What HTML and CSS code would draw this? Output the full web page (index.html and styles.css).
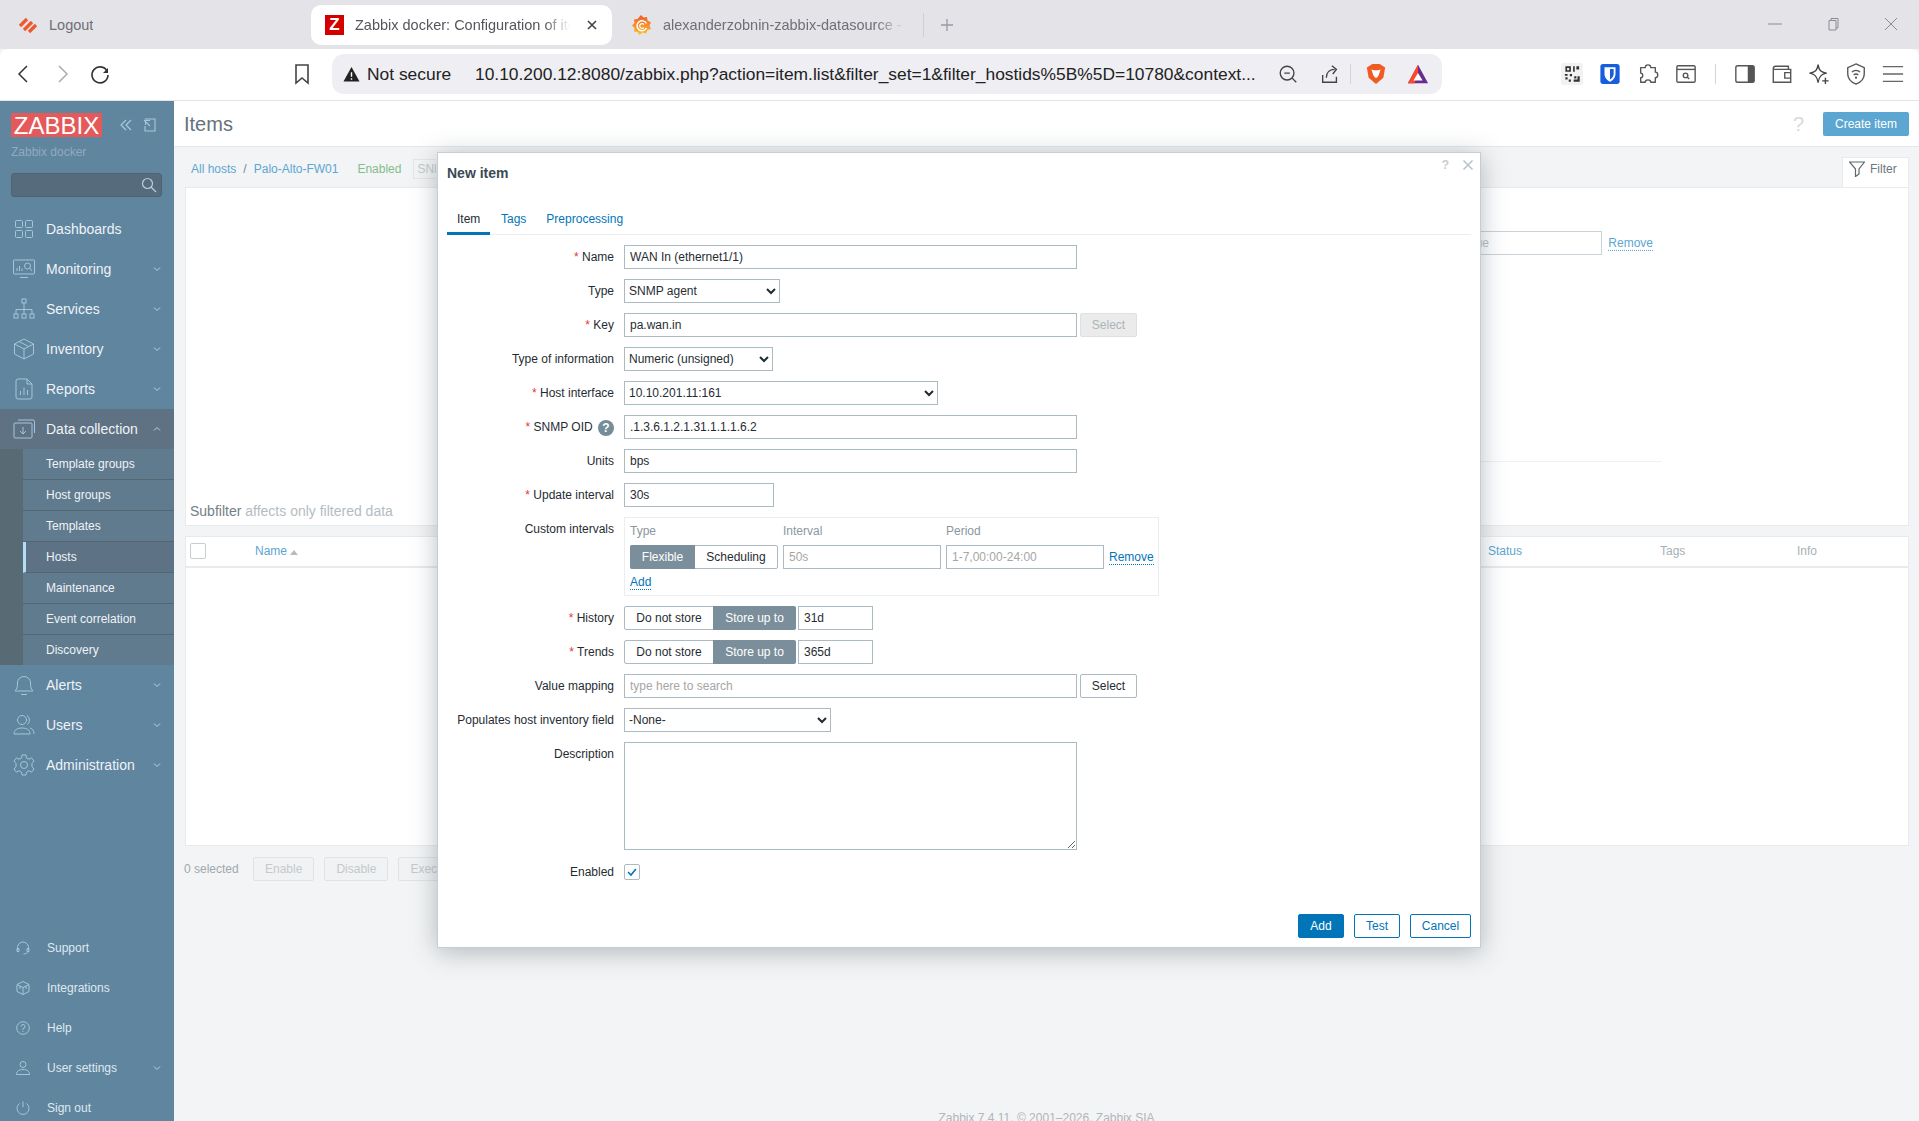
FILE: index.html
```html
<!doctype html>
<html>
<head>
<meta charset="utf-8">
<title>Zabbix docker: Configuration of items</title>
<link rel="stylesheet" href="styles.css">
</head>
<body>

<!-- browser chrome -->
<div class="tabstrip">
	<div class="tab tab-logout">
		<svg class="fav" viewBox="0 0 20 20"><g fill="none" stroke="#f0582b" stroke-width="3.2"><path d="M2 11 9 4"/><path d="M6 15 14 7"/><path d="M11 17 18 10"/></g></svg>
		<span class="tab-title">Logout</span>
	</div>
	<div class="tab tab-active">
		<span class="fav-z">Z</span>
		<span class="tab-title tab-fade">Zabbix docker: Configuration of items</span>
		<svg class="tab-x" viewBox="0 0 12 12"><path d="M2 2 10 10M10 2 2 10" stroke="#444" stroke-width="1.6"/></svg>
	</div>
	<div class="tab tab-grafana">
		<svg class="fav" viewBox="0 0 20 20">
			<defs><linearGradient id="graf" x1="0" y1="1" x2="0" y2="0"><stop offset="0" stop-color="#fcc12e"/><stop offset="1" stop-color="#f05a28"/></linearGradient></defs>
			<path d="M9 0 11.500 2.500 15 2 15.500 5.500 19 7.500 17.500 10.500 19 14 15.500 15 14 18.500 10.500 17.500 7.500 20 5.500 17 2 16.500 2.500 13 0 10.500 2.500 8 2 4.500 5.500 4Z" fill="url(#graf)"/>
			<path d="M14.500 8.500A5 5 0 1 0 14.500 13" fill="none" stroke="#fff" stroke-width="1.500"/>
			<path d="M12 9.500A2.400 2.400 0 1 0 12 12.500" fill="none" stroke="#fff" stroke-width="1.200"/>
		</svg>
		<span class="tab-title tab-fade">alexanderzobnin-zabbix-datasource - Grafana</span>
	</div>
	<span class="tab-sep"></span>
	<svg class="tab-plus" viewBox="0 0 14 14"><path d="M7 1V13M1 7H13" stroke="#9a9aa2" stroke-width="1.3"/></svg>
	<div class="winctl">
		<svg viewBox="0 0 14 14"><path d="M0 7H14" stroke="#8b8b92" stroke-width="1"/></svg>
		<svg viewBox="0 0 14 14"><path d="M3 3.5H10V13H3ZM5 3.5V1.5H12V11H10" fill="none" stroke="#8b8b92"/></svg>
		<svg viewBox="0 0 14 14"><path d="M1 1 13 13M13 1 1 13" stroke="#8b8b92"/></svg>
	</div>
</div>

<div class="toolbar">
	<div class="nav-btns">
		<svg viewBox="0 0 24 24"><path d="M15 4 7 12 15 20" fill="none" stroke="#333" stroke-width="1.5"/></svg>
		<svg viewBox="0 0 24 24"><path d="M9 4 17 12 9 20" fill="none" stroke="#aaa" stroke-width="1.5"/></svg>
		<svg viewBox="0 0 24 24"><path d="M19 9A8 8 0 1 0 20 13" fill="none" stroke="#333" stroke-width="1.6"/><path d="M20 6V11H15Z" fill="#333"/></svg>
	</div>
	<svg class="bookmark" viewBox="0 0 24 24"><path d="M6 3H18V21L12 16 6 21Z" fill="none" stroke="#444" stroke-width="1.6"/></svg>
	<div class="addr">
		<svg class="warn" viewBox="0 0 18 18"><path d="M9 1 17.500 16.500H.5Z" fill="#222"/><path d="M9 6.500V11.500M9 13V14.500" stroke="#fff" stroke-width="1.500"/></svg>
		<span class="not-secure">Not secure</span>
		<span class="url">10.10.200.12:8080/zabbix.php?action=item.list&amp;filter_set=1&amp;filter_hostids%5B%5D=10780&amp;context...</span>
		<svg class="addr-ico a-zoom" viewBox="0 0 24 24"><circle cx="11" cy="11" r="7.500" fill="none" stroke="#444" stroke-width="1.500"/><path d="M8 11H14M16.500 16.500 21 21" stroke="#444" stroke-width="1.500"/></svg>
		<svg class="addr-ico a-share" viewBox="0 0 24 24"><path d="M4 13V21H19V15M8 16C8 10 12 7 17 7M14 3 19 7 15 12" fill="none" stroke="#444" stroke-width="1.500"/></svg>
		<span class="addr-sep"></span>
		<svg class="addr-ico a-brave" viewBox="0 0 24 24"><path d="M5 3 8 1H16L19 3 22 5 20 16 12 23 4 16 2 5Z" fill="#f15a22"/><path d="M7 7 10 8H14L17 7 15 13 13 16H11L9 13Z" fill="#fff"/></svg>
		<svg class="addr-ico a-bat" viewBox="0 0 24 24"><path d="M12 2 23 22H1Z" fill="#662d91"/><path d="M12 2 1 22H8L12 13Z" fill="#ff4724"/><path d="M12 11 17 19H7Z" fill="#fff"/></svg>
	</div>
	<div class="ext">
		<span class="ext-qr"><svg viewBox="0 0 20 20"><path d="M4 3H9V8H4ZM5.500 4.500V6.500H7.500V4.500ZM11 3H12.500V8H11ZM14 3H16.500V6H14ZM3.500 10H6V11.500H3.500ZM8 10H10V12H8ZM4 13H6V15H4ZM7 15H9V17H7ZM12 12H14V14H12ZM15 12H17V17H11.500V15H15Z" fill="#333" fill-rule="evenodd"/></svg></span>
		<svg viewBox="0 0 24 24"><rect x="1.500" y="1" width="21" height="22" rx="3" fill="#175ddc"/><path d="M6 4.500H18V12C18 16 15 19 12 20.500 9 19 6 16 6 12Z" fill="#fff"/><path d="M12 6.500H16V12C16 14.500 14 16.800 12 18Z" fill="#175ddc"/></svg>
		<svg viewBox="0 0 24 24"><path d="M9 5C9 1 15 1 15 5H20V10C23.500 10 23.500 16 20 16V21H15C15 17.500 9 17.500 9 21H4V16C7 16 7 11 4 11V5Z" fill="none" stroke="#555" stroke-width="1.500" stroke-linejoin="round"/></svg>
		<svg viewBox="0 0 24 24"><rect x="2" y="3" width="20" height="18" rx="1.500" fill="none" stroke="#555" stroke-width="1.500"/><path d="M2 7H22" stroke="#555" stroke-width="1.500"/><circle cx="11.500" cy="13.500" r="2.500" fill="none" stroke="#555" stroke-width="1.500"/><path d="M13.500 15.500 15.500 17.500" stroke="#555" stroke-width="1.500"/></svg>
		<span class="ext-sep"></span>
		<svg viewBox="0 0 24 24"><rect x="2" y="3" width="20" height="18" rx="2" fill="none" stroke="#555" stroke-width="1.500"/><rect x="15" y="3" width="7" height="18" rx="1" fill="#555"/></svg>
		<svg viewBox="0 0 24 24"><path d="M19 7V3.500H5A2.500 2.500 0 0 0 2.500 6V21H21.500V7H3" fill="none" stroke="#555" stroke-width="1.500"/><path d="M21.500 10.500H15V16.500H21.500" fill="none" stroke="#555" stroke-width="1.500"/></svg>
		<svg viewBox="0 0 24 24"><path d="M11 2C12 8 14 10 20 11 14 12 12 15 11 21 10 15 8 12 2 11 8 10 10 8 11 2Z" fill="none" stroke="#444" stroke-width="1.500" stroke-linejoin="round"/><path d="M19 16V23M15.500 19.500H22.500" stroke="#444" stroke-width="1.500"/></svg>
		<svg viewBox="0 0 24 24"><path d="M12 1 21 5V12C21 17 17 21 12 23 7 21 3 17 3 12V5Z" fill="none" stroke="#555" stroke-width="1.500"/><path d="M7.500 10C10 7.500 14 7.500 16.500 10M9.500 13C11 11.800 13 11.800 14.500 13" fill="none" stroke="#555" stroke-width="1.400"/><circle cx="12" cy="16" r="1.200" fill="#555"/></svg>
		<svg viewBox="0 0 24 24"><path d="M1 4H23M1 12H23M1 20H23" stroke="#666" stroke-width="1.500"/></svg>
	</div>
</div>

<div class="app">

	<aside class="sidebar">
		<div class="brand">
			<span class="logo">ZABBIX</span>
			<svg class="brand-ico" viewBox="0 0 14 14"><path d="M7 2 2 7 7 12M12 2 7 7 12 12" fill="none" stroke="#a9c8dc" stroke-width="1.200"/></svg>
			<svg class="brand-ico" viewBox="0 0 14 14"><path d="M3 1H13V13H3V8M2 2 8 8M3.500 7V2.500H8" fill="none" stroke="#a9c8dc" stroke-width="1.100"/></svg>
		</div>
		<div class="server">Zabbix docker</div>
		<div class="search">
			<svg viewBox="0 0 16 16"><circle cx="6.500" cy="6.500" r="5" fill="none" stroke="#b8cfdd" stroke-width="1.200"/><path d="M10 10 15 15" stroke="#b8cfdd" stroke-width="1.200"/></svg>
		</div>

		<nav class="menu">
			<div class="mi">
				<svg viewBox="0 0 22 22"><g fill="none" stroke="#a3c6dc"><rect x="2.500" y="2.500" width="7" height="7" rx="1"/><rect x="12.500" y="2.500" width="7" height="7" rx="1"/><rect x="2.500" y="12.500" width="7" height="7" rx="1"/><rect x="12.500" y="12.500" width="7" height="7" rx="1"/></g></svg>
				<span>Dashboards</span>
			</div>
			<div class="mi has-sub">
				<svg viewBox="0 0 22 22"><g fill="none" stroke="#a3c6dc"><path d="M13 2H2A1 1 0 0 0 .5 3V15A1 1 0 0 0 2 16H20A1.500 1.500 0 0 0 21.500 15V3A1 1 0 0 0 20 2Z"/><path d="M7 19.500H15M4 13V10M6.500 13V8M9 13V10.500"/><circle cx="14.500" cy="8" r="3"/><path d="M16.700 10 19 13"/></g></svg>
				<span>Monitoring</span>
				<svg class="chev" viewBox="0 0 8 6"><path d="M1 1.500 4 4.500 7 1.500" fill="none" stroke="#b9d2e2"/></svg>
			</div>
			<div class="mi has-sub">
				<svg viewBox="0 0 22 22"><g fill="none" stroke="#a3c6dc"><rect x="9" y="1" width="4" height="4"/><rect x="1" y="16" width="4" height="4"/><rect x="9" y="16" width="4" height="4"/><rect x="17" y="16" width="4" height="4"/><path d="M11 5V16M3 16V11.500H19V16"/></g></svg>
				<span>Services</span>
				<svg class="chev" viewBox="0 0 8 6"><path d="M1 1.500 4 4.500 7 1.500" fill="none" stroke="#b9d2e2"/></svg>
			</div>
			<div class="mi has-sub">
				<svg viewBox="0 0 22 22"><path d="M11 1 20.500 6V16L11 21 1.500 16V6ZM1.500 6 11 11 20.500 6M11 11V21M6 3.500 15.500 8.500" fill="none" stroke="#a3c6dc"/></svg>
				<span>Inventory</span>
				<svg class="chev" viewBox="0 0 8 6"><path d="M1 1.500 4 4.500 7 1.500" fill="none" stroke="#b9d2e2"/></svg>
			</div>
			<div class="mi has-sub">
				<svg viewBox="0 0 22 22"><path d="M5 1H14L19 6V19A2 2 0 0 1 17 21H5A2 2 0 0 1 3 19V3A2 2 0 0 1 5 1ZM14 1V6H19M7.500 17V13M11 17V9.500M14.500 17V12" fill="none" stroke="#a3c6dc"/></svg>
				<span>Reports</span>
				<svg class="chev" viewBox="0 0 8 6"><path d="M1 1.500 4 4.500 7 1.500" fill="none" stroke="#b9d2e2"/></svg>
			</div>
			<div class="mi has-sub mi-open">
				<svg viewBox="0 0 22 22"><path d="M2 5H18A1 1 0 0 1 19 6V19A1 1 0 0 1 18 20H2A1 1 0 0 1 1 19V6A1 1 0 0 1 2 5ZM5 2H20A1.500 1.500 0 0 1 21.500 3.500V15M10 9V16M7 13 10 16 13 13" fill="none" stroke="#a3c6dc"/></svg>
				<span>Data collection</span>
				<svg class="chev" viewBox="0 0 8 6"><path d="M1 4.500 4 1.500 7 4.500" fill="none" stroke="#b9d2e2"/></svg>
			</div>
			<div class="submenu">
				<div class="si">Template groups</div>
				<div class="si">Host groups</div>
				<div class="si">Templates</div>
				<div class="si si-selected">Hosts</div>
				<div class="si">Maintenance</div>
				<div class="si">Event correlation</div>
				<div class="si">Discovery</div>
			</div>
			<div class="mi has-sub">
				<svg viewBox="0 0 22 22"><path d="M2 17C4 15 4.500 13 4.500 9A6.500 6.500 0 0 1 17.500 9C17.500 13 18 15 20 17ZM8 20.500H14" fill="none" stroke="#a3c6dc"/></svg>
				<span>Alerts</span>
				<svg class="chev" viewBox="0 0 8 6"><path d="M1 1.500 4 4.500 7 1.500" fill="none" stroke="#b9d2e2"/></svg>
			</div>
			<div class="mi has-sub">
				<svg viewBox="0 0 22 22"><g fill="none" stroke="#a3c6dc"><circle cx="9" cy="6" r="4.500"/><path d="M1 20C1 16 4 14 9 14S17 16 17 20ZM14 1.500C17 3 17 9 14.500 10.500M17 14C20 15 21 17 21 20"/></g></svg>
				<span>Users</span>
				<svg class="chev" viewBox="0 0 8 6"><path d="M1 1.500 4 4.500 7 1.500" fill="none" stroke="#b9d2e2"/></svg>
			</div>
			<div class="mi has-sub">
				<svg viewBox="0 0 22 22"><g fill="none" stroke="#a3c6dc"><circle cx="11" cy="11" r="3.500"/><path d="M9 1H13L13.500 4 16 5.300 18.500 3.800 21 7 19 9.300V12.700L21 15 18.500 18.200 16 16.700 13.500 18 13 21H9L8.500 18 6 16.700 3.500 18.200 1 15 3 12.700V9.300L1 7 3.500 3.800 6 5.300 8.500 4Z"/></g></svg>
				<span>Administration</span>
				<svg class="chev" viewBox="0 0 8 6"><path d="M1 1.500 4 4.500 7 1.500" fill="none" stroke="#b9d2e2"/></svg>
			</div>
		</nav>

		<nav class="usermenu">
			<div class="ui">
				<svg viewBox="0 0 14 14"><path d="M1.500 9V6.500A5.500 5.500 0 0 1 12.500 6.500V9M1 7.500H3V10.500H1ZM11 7.500H13V10.500H11ZM12 10.500C12 12 10 13 7.500 13" fill="none" stroke="#a3c6dc"/></svg>
				<span>Support</span>
			</div>
			<div class="ui">
				<svg viewBox="0 0 14 14"><path d="M7 .5 13 3.500V10.500L7 13.500 1 10.500V3.500ZM1 3.500 7 6.500 13 3.500M7 6.500V13.500M4 5V8M10 5V8" fill="none" stroke="#a3c6dc"/></svg>
				<span>Integrations</span>
			</div>
			<div class="ui">
				<svg viewBox="0 0 14 14"><circle cx="7" cy="7" r="6.300" fill="none" stroke="#a3c6dc"/><path d="M5 5.500A2 2 0 1 1 7 7.500V9M7 10V11" fill="none" stroke="#a3c6dc"/></svg>
				<span>Help</span>
			</div>
			<div class="ui">
				<svg viewBox="0 0 14 14"><circle cx="7" cy="3.500" r="3" fill="none" stroke="#a3c6dc"/><path d="M.5 13.500C.5 10 3 8.500 7 8.500S13.500 10 13.500 13.500Z" fill="none" stroke="#a3c6dc"/></svg>
				<span>User settings</span>
				<svg class="chev" viewBox="0 0 8 6"><path d="M1 1.500 4 4.500 7 1.500" fill="none" stroke="#b9d2e2"/></svg>
			</div>
			<div class="ui">
				<svg viewBox="0 0 14 14"><path d="M3.500 2.500A6 6 0 1 0 10.500 2.500M7 .5V6" fill="none" stroke="#a3c6dc"/></svg>
				<span>Sign out</span>
			</div>
		</nav>
	</aside>

	<main class="main">
		<header class="page-head">
			<h1>Items</h1>
			<span class="head-help">?</span>
			<button class="btn-create">Create item</button>
		</header>

		<div class="crumbs-row">
			<div class="crumbs">
				<a>All hosts</a><span class="slash">/</span><a>Palo-Alto-FW01</a>
				<span class="status-on">Enabled</span>
				<span class="tag-snmp">SNMP</span>
			</div>
			<div class="filter-tab">
				<svg viewBox="0 0 16 16"><path d="M.5 1H15.500L10 8V13L6.500 15.500V8Z" fill="none" stroke="#5c666d" stroke-width="1.200"/></svg>
				<span>Filter</span>
			</div>
		</div>

		<section class="filter-panel">
			<div class="filter-row">
				<input class="flt-value" type="text" placeholder="value">
				<a class="dotted flt-remove">Remove</a>
			</div>
			<div class="filter-line"></div>
			<div class="subfilter"><b>Subfilter</b> affects only filtered data</div>
		</section>

		<section class="list">
			<div class="list-head">
				<span class="list-check"></span>
				<a class="col-name">Name <i class="sort-up"></i></a>
				<a class="col-status">Status</a>
				<span class="col-tags">Tags</span>
				<span class="col-info">Info</span>
			</div>
		</section>

		<div class="actions">
			<span class="sel-count">0 selected</span>
			<button class="btn-off">Enable</button>
			<button class="btn-off">Disable</button>
			<button class="btn-off">Execute now</button>
		</div>

		<footer class="foot">Zabbix 7.4.11. © 2001–2026, Zabbix SIA</footer>
	</main>
</div>

<!-- popup over the page -->
<div class="modal">
	<div class="modal-head">
		<h4>New item</h4>
		<span class="modal-help">?</span>
		<svg class="modal-x" viewBox="0 0 12 12"><path d="M1.500 1.500 10.500 10.500M10.500 1.500 1.500 10.500" stroke="#b9c3c9" stroke-width="1.500"/></svg>
	</div>

	<div class="tabs">
		<a class="t-active">Item</a>
		<a>Tags</a>
		<a>Preprocessing</a>
	</div>

	<form class="form">
		<label><em>*</em> Name</label>
		<div><input class="w-full" type="text" value="WAN In (ethernet1/1)"></div>

		<label>Type</label>
		<div><select class="w-type"><option>SNMP agent</option></select></div>

		<label><em>*</em> Key</label>
		<div class="field-line"><input class="w-full" type="text" value="pa.wan.in"><button type="button" class="btn-select is-off">Select</button></div>

		<label>Type of information</label>
		<div><select class="w-info"><option>Numeric (unsigned)</option></select></div>

		<label><em>*</em> Host interface</label>
		<div><select class="w-iface"><option>10.10.201.11:161</option></select></div>

		<label><em>*</em> SNMP OID <i class="hint">?</i></label>
		<div><input class="w-full" type="text" value=".1.3.6.1.2.1.31.1.1.1.6.2"></div>

		<label>Units</label>
		<div><input class="w-full" type="text" value="bps"></div>

		<label><em>*</em> Update interval</label>
		<div><input class="w-upd" type="text" value="30s"></div>

		<label>Custom intervals</label>
		<div class="intervals">
			<div class="int-grid">
				<span class="int-h">Type</span>
				<span class="int-h">Interval</span>
				<span class="int-h">Period</span>
				<span></span>
				<div class="seg"><span class="seg-on">Flexible</span><span>Scheduling</span></div>
				<input type="text" placeholder="50s">
				<input type="text" placeholder="1-7,00:00-24:00">
				<a class="dotted link">Remove</a>
			</div>
			<a class="dotted link int-add">Add</a>
		</div>

		<label><em>*</em> History</label>
		<div class="field-line"><div class="seg seg-store"><span>Do not store</span><span class="seg-on">Store up to</span></div><input class="w-keep" type="text" value="31d"></div>

		<label><em>*</em> Trends</label>
		<div class="field-line"><div class="seg seg-store"><span>Do not store</span><span class="seg-on">Store up to</span></div><input class="w-keep" type="text" value="365d"></div>

		<label>Value mapping</label>
		<div class="field-line"><input class="w-full" type="text" placeholder="type here to search"><button type="button" class="btn-select">Select</button></div>

		<label>Populates host inventory field</label>
		<div><select class="w-inv"><option>-None-</option></select></div>

		<label>Description</label>
		<div><textarea class="w-full"></textarea></div>

		<label>Enabled</label>
		<div class="check-line"><span class="check"><svg viewBox="0 0 16 16"><path d="M3.500 8 6.800 11.500 12.500 4.500" fill="none" stroke="#0275b8" stroke-width="1.800"/></svg></span></div>
	</form>

	<div class="modal-foot">
		<button class="btn-add">Add</button>
		<button class="btn-line">Test</button>
		<button class="btn-line btn-cancel">Cancel</button>
	</div>
</div>

</body>
</html>
```

FILE: styles.css
```css
*{
	box-sizing:border-box;
}
html,body{
	margin:0px;
	padding:0px;
	height:100%;
}
body{
	position:relative;
	overflow:hidden;
	display:flex;
	flex-direction:column;
	background:#f3f4f5;
	font-family:"Liberation Sans",Arial,sans-serif;
	font-size:12px;
	color:#1f2c33;
}

/* browser chrome */
.tabstrip{
	display:flex;
	align-items:flex-end;
	flex:none;
	height:49px;
	background:#e3e3e8;
}
.tab{
	display:flex;
	align-items:center;
	height:40px;
	margin-bottom:4px;
	font-size:14.500px;
	color:#6f6f76;
	white-space:nowrap;
}
.tab-logout{
	width:311px;
	padding-left:18px;
}
.tab-active{
	width:301px;
	padding:0 14px;
	background:#fff;
	border-radius:10px;
	color:#55555c;
}
.tab-grafana{
	width:311px;
	padding:0 18px 0 20px;
}
.fav{
	flex:none;
	width:20px;
	height:20px;
	margin-right:11px;
}
.fav-z{
	flex:none;
	width:19px;
	height:20px;
	margin-right:11px;
	background:#d40000;
	color:#fff;
	font-weight:bold;
	font-size:17px;
	line-height:20px;
	text-align:center;
}
.tab-title{
	overflow:hidden;
}
.tab-fade{
	flex:1;
	-webkit-mask-image:linear-gradient(to right,#000 88%,transparent 100%);
	mask-image:linear-gradient(to right,#000 88%,transparent 100%);
}
.tab-x{
	flex:none;
	width:12px;
	height:12px;
	margin-left:16px;
}
.tab-sep{
	width:1px;
	height:24px;
	margin-bottom:12px;
	background:#cfcfd5;
}
.tab-plus{
	width:14px;
	height:14px;
	margin:0 0 17px 16px;
}
.winctl{
	display:flex;
	gap:44px;
	margin-left:auto;
	margin-right:21px;
	margin-bottom:18px;
}
.winctl svg{
	width:14px;
	height:14px;
}
.toolbar{
	display:flex;
	align-items:center;
	flex:none;
	height:52px;
	padding-bottom:1px;
	background:#fff;
	border-bottom:1px solid #e3e3e8;
	border-radius:8px 8px 0 0;
}
.nav-btns{
	display:flex;
	gap:14px;
	margin-left:12px;
}
.nav-btns svg{
	width:24px;
	height:24px;
}
.bookmark{
	width:24px;
	height:24px;
	margin-left:178px;
}
.addr{
	display:flex;
	align-items:center;
	width:1110px;
	height:40px;
	margin-left:18px;
	padding-left:11px;
	background:#eeeef3;
	border-radius:12px;
	font-size:17.400px;
	color:#222;
	white-space:nowrap;
}
.warn{
	width:17px;
	height:17px;
	margin-right:7px;
}
.not-secure{
	width:108px;
}
.url{
	width:802px;
}
.addr-ico{
	width:22px;
	height:22px;
}
.a-share{
	margin-left:20px;
}
.addr-sep{
	width:1px;
	height:20px;
	margin:0 14px 0 9px;
	background:#d4d4da;
}
.a-bat{
	margin-left:20px;
}
.ext{
	display:flex;
	align-items:center;
	margin-left:119px;
	gap:16px;
}
.ext svg{
	width:22px;
	height:22px;
	display:block;
}
.ext-qr{
	width:22px;
	height:22px;
	background:#f2f2f2;
	border-radius:2px;
}
.ext-sep{
	width:1px;
	height:20px;
	margin:0 2px;
	background:#d4d4da;
}
.ext-sep ~ svg + svg{
	margin-left:-1px;
}

/* app */
.app{
	display:flex;
	flex:1;
	min-height:0;
}
.sidebar{
	display:flex;
	flex-direction:column;
	flex:none;
	width:174px;
	overflow:hidden;
	background:#60859f;
	color:#eef3f7;
}
.brand{
	display:flex;
	align-items:center;
	flex:none;
	margin:12px 0 0 11px;
}
.logo{
	width:91px;
	height:24px;
	background:#e45959;
	color:#fff;
	font-size:24px;
	line-height:25px;
	text-align:center;
}
.brand-ico{
	width:14px;
	height:14px;
	margin-left:17px;
}
.brand-ico + .brand-ico{
	margin-left:9px;
}
.server{
	flex:none;
	margin:7px 0 0 11px;
	line-height:16px;
	color:#8fabbf;
}
.search{
	display:flex;
	align-items:center;
	justify-content:flex-end;
	flex:none;
	height:24px;
	margin:13px 12px 0 11px;
	padding-right:4px;
	background:#566c7d;
	border:1px solid #4e6272;
	border-radius:3px;
}
.search svg{
	width:16px;
	height:16px;
}
.menu{
	flex:none;
	margin-top:12px;
}
.mi{
	display:flex;
	align-items:center;
	height:40px;
	padding-left:13px;
	font-size:14px;
}
.mi > svg:first-child{
	flex:none;
	width:22px;
	height:22px;
	margin-right:11px;
}
.chev{
	width:8px;
	height:6px;
	margin-left:auto;
	margin-right:13px;
}
.mi-open{
	background:#5e7283;
}
.submenu{
	padding-left:23px;
	background:#586a74;
}
.si{
	height:31px;
	padding-left:23px;
	line-height:30px;
	background:#607a8e;
	border-bottom:1px solid #546672;
	color:#eef3f7;
}
.si:last-child{
	height:30px;
	border-bottom:0;
}
.si-selected{
	padding-left:20px;
	background:#5d7385;
	border-left:3px solid #b5dcf5;
}
.usermenu{
	flex:none;
	margin-top:auto;
	margin-bottom:-7px;
}
.ui{
	display:flex;
	align-items:center;
	height:40px;
	padding-left:16px;
	color:#dfe9f0;
}
.ui > svg:first-child{
	flex:none;
	width:14px;
	height:14px;
	margin-right:17px;
}

.main{
	flex:1;
	min-width:0;
	display:flex;
	flex-direction:column;
	overflow:hidden;
}
.page-head{
	display:flex;
	align-items:center;
	flex:none;
	height:46px;
	padding:0 9px 0 10px;
	background:#fff;
	border-bottom:1px solid #e5e8ea;
}
.page-head h1{
	margin:0;
	padding-top:1px;
	font-size:20px;
	font-weight:normal;
	color:#66727a;
}
.head-help{
	margin-left:auto;
	padding-top:1px;
	font-size:20px;
	color:#d5dade;
}
.btn-create{
	width:86px;
	height:24px;
	margin-left:19px;
	margin-right:1px;
	padding:0;
	background:#5ca6d2;
	border:0;
	border-radius:2px;
	color:#fff;
	font:12px "Liberation Sans",Arial,sans-serif;
}
.crumbs-row{
	display:flex;
	flex:none;
	height:40px;
	padding:10px 10px 0 11px;
}
.crumbs{
	display:flex;
	align-items:center;
	height:23px;
	padding-left:6px;
	color:#5ca6d2;
}
.slash{
	margin:0 7px;
	color:#7b8790;
}
.status-on{
	margin-left:19px;
	color:#83bd8e;
}
.tag-snmp{
	width:23px;
	margin-left:12px;
	padding:2px 0 2px 3px;
	overflow:hidden;
	background:#f3f4f5;
	border:1px solid #e4e7e9;
	border-right:0;
	color:#c4cacd;
}
.filter-tab{
	display:flex;
	align-items:flex-start;
	width:67px;
	height:30px;
	margin-left:auto;
	padding:3px 0 0 6px;
	line-height:16px;
	background:#fff;
	border:1px solid #e8ebed;
	border-bottom:0;
	color:#6c767d;
}
.filter-tab svg{
	width:16px;
	height:16px;
	margin-right:5px;
}
.filter-panel{
	display:flex;
	flex-direction:column;
	flex:none;
	height:339px;
	margin:0 10px 0 11px;
	background:#fff;
	border:1px solid #e8ebed;
	border-top:1px solid #e8ebed;
}
.filter-row{
	display:flex;
	align-items:center;
	justify-content:flex-end;
	gap:6px;
	margin-top:43px;
	padding-right:255px;
}
.flt-value{
	width:148px;
	height:24px;
	padding:0 5px;
	border:1px solid #c9d3d9;
	font:12px "Liberation Sans",Arial,sans-serif;
}
.flt-value::placeholder{
	color:#b9bfc3;
}
.dotted{
	border-bottom:1px dotted currentColor;
}
.flt-remove{
	color:#5ca6d2;
}
.filter-line{
	height:1px;
	margin:206px 246px 0 1000px;
	background:#eff1f2;
}
.subfilter{
	margin-top:auto;
	padding:0 0 5px 4px;
	font-size:14px;
	line-height:18px;
	color:#b4bcc2;
}
.subfilter b{
	font-weight:normal;
	color:#737e86;
}
.list{
	flex:none;
	height:310px;
	margin:10px 10px 0 11px;
	background:#fff;
	border:1px solid #e8ebed;
}
.list-head{
	display:flex;
	align-items:center;
	height:31px;
	padding-bottom:1px;
	border-bottom:2px solid #e8ebed;
	color:#a8b0b5;
}
.list-check{
	width:16px;
	height:16px;
	margin-left:4px;
	background:#fff;
	border:1px solid #c5ced3;
	border-radius:2px;
}
.col-name{
	margin-left:49px;
	width:1233px;
	color:#5ca6d2;
}
.sort-up{
	display:inline-block;
	width:0;
	height:0;
	border:4px solid transparent;
	border-top:0;
	border-bottom:5px solid #b4bcc2;
}
.col-status{
	width:172px;
	color:#5ca6d2;
}
.col-tags{
	width:137px;
}
.actions{
	display:flex;
	align-items:center;
	flex:none;
	gap:10px;
	height:46px;
	padding-left:10px;
	color:#9fa8ae;
}
.sel-count{
	width:59px;
}
.btn-off{
	height:24px;
	padding:0 11px;
	background:#f1f2f3;
	border:1px solid #dfe3e5;
	border-radius:2px;
	color:#c3c9cd;
	font:12px "Liberation Sans",Arial,sans-serif;
}
.foot{
	flex:none;
	margin-top:218px;
	height:16px;
	line-height:16px;
	text-align:center;
	color:#b0b6ba;
	font-size:12px;
}

/* popup */
.modal{
	position:absolute;
	left:437px;
	top:152px;
	display:flex;
	flex-direction:column;
	width:1044px;
	height:796px;
	padding:0 9px 0 10px;
	background:#fff;
	border:1px solid #c4cdd2;
	box-shadow:0 4px 24px rgba(58,78,92,.36);
}
.modal-head{
	display:flex;
	align-items:center;
	height:35px;
	margin-top:3px;
	padding-top:5px;
}
.modal-head h4{
	margin:-6px 0 0 -1px;
	font-size:14px;
	line-height:16px;
	color:#3a4a53;
}
.modal-help{
	margin:-23px 13px 0 auto;
	font-size:12px;
	font-weight:bold;
	color:#c5ccd1;
}
.modal-x{
	width:12px;
	height:12px;
	margin:-23px -3px 0 0;
}
.tabs{
	display:flex;
	height:44px;
	margin:0 0 10px -1px;
	padding-top:21px;
	border-bottom:1px solid #ebeef0;
}
.tabs a{
	height:23px;
	padding:0 10px;
	line-height:15px;
	color:#0275b8;
}
.tabs .t-active{
	width:43px;
	margin-right:1px;
	color:#1f2c33;
	border-bottom:3px solid #0275b8;
}
.form{
	display:grid;
	grid-template-columns:167px 1fr;
	column-gap:10px;
	row-gap:10px;
	margin-left:-1px;
}
.form label{
	line-height:24px;
	text-align:right;
	white-space:nowrap;
}
.form em{
	font-style:normal;
	color:#e33734;
}
.hint{
	display:inline-block;
	width:16px;
	height:16px;
	margin-left:2px;
	background:#768d99;
	border-radius:50%;
	color:#fff;
	font-style:normal;
	font-weight:bold;
	line-height:16px;
	text-align:center;
	vertical-align:-1px;
}
input,select,textarea{
	height:24px;
	padding:0 5px;
	background:#fff;
	border:1px solid #acbbc3;
	border-radius:0;
	color:#1f2c33;
	font:12px "Liberation Sans",Arial,sans-serif;
	outline:0;
}
select{
	padding:0;
}
input::placeholder{
	color:#a6a6a6;
}
.w-full{
	width:453px;
}
.w-type{
	width:156px;
}
.w-info{
	width:149px;
}
.w-iface{
	width:314px;
}
.w-upd{
	width:150px;
}
.w-keep{
	width:75px;
}
.w-inv{
	width:207px;
}
textarea{
	display:block;
	height:108px;
}
.field-line{
	display:flex;
	gap:3px;
}
.btn-select{
	width:57px;
	height:24px;
	padding:0;
	background:#fff;
	border:1px solid #acbbc3;
	border-radius:2px;
	color:#1f2c33;
	font:12px "Liberation Sans",Arial,sans-serif;
}
.btn-select.is-off{
	background:#ebebeb;
	border-color:#dbe1e4;
	color:#acb5ba;
}
.intervals{
	width:535px;
	height:79px;
	padding:4px 5px 0;
	border:1px solid #ebeef0;
}
.int-grid{
	display:grid;
	grid-template-columns:148px 158px 158px auto;
	column-gap:5px;
	row-gap:5px;
}
.int-h{
	line-height:18px;
	color:#8b979e;
}
.int-grid input{
	width:100%;
}
.seg{
	display:flex;
	width:148px;
	height:24px;
	line-height:22px;
	background:#fff;
	border:1px solid #acbbc3;
	border-radius:2px;
}
.seg span{
	flex:1;
	text-align:center;
}
.seg .seg-on{
	flex:none;
	width:65px;
	margin:-1px 0 -1px -1px;
	line-height:24px;
	background:#7a8f9b;
	color:#fff;
	border-radius:2px 0 0 2px;
}
.seg-store{
	width:171px;
}
.seg-store .seg-on{
	width:83px;
	margin:-1px -1px -1px 0;
	border-radius:0 2px 2px 0;
}
.seg-store span{
	flex:none;
	width:88px;
}
.link{
	align-self:center;
	justify-self:start;
	line-height:14px;
	color:#0275b8;
}
.int-add{
	display:inline-block;
	margin-top:6px;
}
.check-line{
	height:24px;
	padding-top:4px;
}
.check{
	display:block;
	width:16px;
	height:16px;
	border:1px solid #acbbc3;
	border-radius:2px;
}
.check svg{
	display:block;
	width:14px;
	height:14px;
}
.modal-foot{
	display:flex;
	justify-content:flex-end;
	gap:10px;
	margin-top:auto;
	margin-bottom:9px;
}
.modal-foot button{
	width:46px;
	height:24px;
	padding:0;
	border-radius:2px;
	font:12px "Liberation Sans",Arial,sans-serif;
}
.btn-add{
	background:#0275b8;
	border:1px solid #0275b8;
	color:#fff;
}
.btn-line{
	background:#fff;
	border:1px solid #0275b8;
	color:#0275b8;
}
.modal-foot .btn-cancel{
	width:61px;
}
```
